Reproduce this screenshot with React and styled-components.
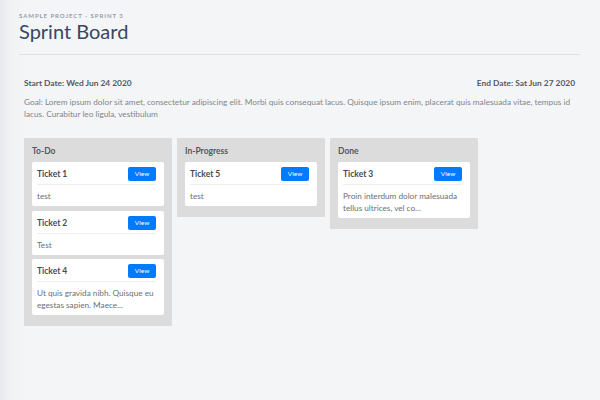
import React from "react";
import styled, { createGlobalStyle } from "styled-components";

const Global = createGlobalStyle`
  html, body { margin: 0; padding: 0; }
  body {
    background: #f4f5f7;
    font-family: Lato, "Open Sans", "Liberation Sans", sans-serif;
    -webkit-font-smoothing: antialiased;
  }
`;

const Page = styled.div`
  min-height: 400px;
  box-sizing: border-box;
  padding: 12px 20px 20px 19px;
  background: linear-gradient(to right, #e7e9ec 0px, #f0f1f3 10px, #f4f5f7 24px);
`;

const Header = styled.header`
  border-bottom: 1px solid #dfe1e5;
  padding-bottom: 11px;
`;

const Crumb = styled.div`
  font-size: 6px;
  line-height: 7px;
  letter-spacing: 0.95px;
  text-transform: uppercase;
  color: #959ca7;
  font-weight: 700;
`;

const Title = styled.h1`
  margin: 0;
  font-size: 20px;
  line-height: 24px;
  font-weight: 400;
  color: #3a4760;
`;

const Body = styled.main`
  padding: 22px 5px 0 5px;
`;

const Dates = styled.div`
  display: flex;
  justify-content: space-between;
  font-size: 8.4px;
  line-height: 12px;
  font-weight: 700;
  color: #555a63;
`;

const Goal = styled.p`
  margin: 7px 0 0;
  font-size: 8.25px;
  line-height: 12px;
  color: #80868f;
`;

const Board = styled.div`
  display: flex;
  align-items: flex-start;
  gap: 5px;
  margin-top: 18px;
`;

const Column = styled.section`
  width: 148px;
  box-sizing: border-box;
  background: #dcdcdc;
  padding: 8px 8px 11px;
  border-radius: 1px;
`;

const ColumnTitle = styled.div`
  font-size: 8.5px;
  line-height: 11px;
  font-weight: 700;
  color: #545860;
  margin-bottom: 5px;
`;

const Cards = styled.div`
  display: flex;
  flex-direction: column;
  gap: 4.5px;
`;

const Card = styled.div`
  background: #fff;
  border-radius: 2px;
  padding: 5px 8px 4px 5px;
`;

const CardHead = styled.div`
  display: flex;
  justify-content: space-between;
  align-items: center;
  padding-bottom: 3px;
  border-bottom: 1px solid #eeeeee;
`;

const CardTitle = styled.div`
  font-size: 8.5px;
  font-weight: 700;
  color: #464a52;
`;

const ViewButton = styled.button`
  width: 28px;
  height: 14px;
  padding: 0;
  border: none;
  border-radius: 2px;
  background: #007bff;
  color: #fff;
  font-family: inherit;
  font-size: 6.5px;
  line-height: 14px;
`;

const CardText = styled.div`
  margin-top: 5px;
  font-size: 8.2px;
  line-height: 12px;
  color: #6b6f76;
`;

const columns = [
  {
    title: "To-Do",
    tickets: [
      { name: "Ticket 1", text: "test" },
      { name: "Ticket 2", text: "Test" },
      { name: "Ticket 4", text: "Ut quis gravida nibh. Quisque eu egestas sapien. Maece..." },
    ],
  },
  { title: "In-Progress", tickets: [{ name: "Ticket 5", text: "test" }] },
  {
    title: "Done",
    tickets: [{ name: "Ticket 3", text: "Proin interdum dolor malesuada tellus ultrices, vel co..." }],
  },
];

export default function App() {
  return (
    <>
      <Global />
      <Page>
        <Header>
          <Crumb>Sample Project - Sprint 3</Crumb>
          <Title>Sprint Board</Title>
        </Header>
        <Body>
          <Dates>
            <span>Start Date: Wed Jun 24 2020</span>
            <span>End Date: Sat Jun 27 2020</span>
          </Dates>
          <Goal>
            Goal: Lorem ipsum dolor sit amet, consectetur adipiscing elit. Morbi quis consequat lacus. Quisque ipsum enim, placerat quis malesuada vitae, tempus id lacus. Curabitur leo ligula, vestibulum
          </Goal>
          <Board>
            {columns.map((c) => (
              <Column key={c.title}>
                <ColumnTitle>{c.title}</ColumnTitle>
                <Cards>
                  {c.tickets.map((t) => (
                    <Card key={t.name}>
                      <CardHead>
                        <CardTitle>{t.name}</CardTitle>
                        <ViewButton>View</ViewButton>
                      </CardHead>
                      <CardText>{t.text}</CardText>
                    </Card>
                  ))}
                </Cards>
              </Column>
            ))}
          </Board>
        </Body>
      </Page>
    </>
  );
}
